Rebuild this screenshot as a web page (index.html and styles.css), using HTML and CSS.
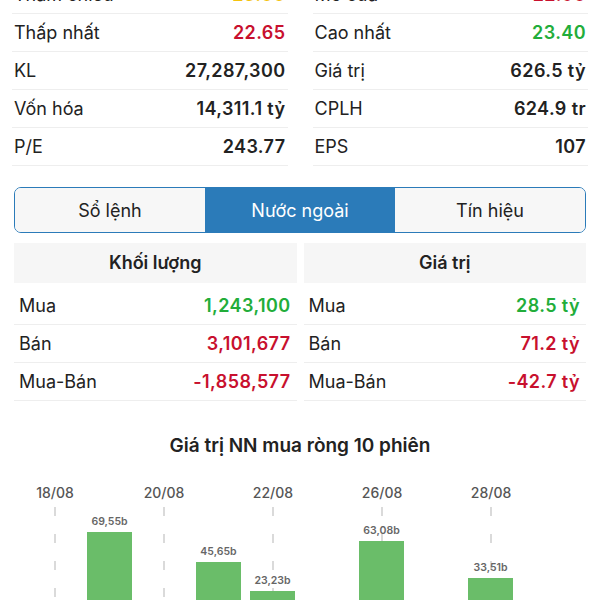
FILE: index.html
```html
<!DOCTYPE html>
<html lang="vi">
<head>
  <meta charset="UTF-8" />
  <meta name="viewport" content="width=device-width, initial-scale=1" />
  <title>Chi tiết cổ phiếu</title>
  <link rel="stylesheet" href="styles.css">
</head>
<body>
  <div class="page">
    <!-- thông tin giá -->
    <div class="stats">
      <div class="stat-col">
        <div class="row"><span>Tham chiếu</span><b class="ref">23.00</b></div>
        <div class="row"><span>Thấp nhất</span><b class="down">22.65</b></div>
        <div class="row"><span>KL</span><b>27,287,300</b></div>
        <div class="row"><span>Vốn hóa</span><b>14,311.1 tỷ</b></div>
        <div class="row"><span>P/E</span><b>243.77</b></div>
      </div>
      <div class="stat-col">
        <div class="row"><span>Mở cửa</span><b class="down">22.90</b></div>
        <div class="row"><span>Cao nhất</span><b class="up">23.40</b></div>
        <div class="row"><span>Giá trị</span><b>626.5 tỷ</b></div>
        <div class="row"><span>CPLH</span><b>624.9 tr</b></div>
        <div class="row"><span>EPS</span><b>107</b></div>
      </div>
    </div>

    <div class="tabs">
      <button class="tab">Sổ lệnh</button>
      <button class="tab active">Nước ngoài</button>
      <button class="tab">Tín hiệu</button>
    </div>

    <div class="foreign">
      <div class="table">
        <div class="table-head">Khối lượng</div>
        <div class="row"><span>Mua</span><b class="up">1,243,100</b></div>
        <div class="row"><span>Bán</span><b class="down">3,101,677</b></div>
        <div class="row"><span>Mua-Bán</span><b class="down">-1,858,577</b></div>
      </div>
      <div class="table">
        <div class="table-head">Giá trị</div>
        <div class="row"><span>Mua</span><b class="up">28.5 tỷ</b></div>
        <div class="row"><span>Bán</span><b class="down">71.2 tỷ</b></div>
        <div class="row"><span>Mua-Bán</span><b class="down">-42.7 tỷ</b></div>
      </div>
    </div>
  </div>

  <div class="chart">
    <h3 class="chart-title">Giá trị NN mua ròng 10 phiên</h3>
    <svg class="chart-svg" viewBox="0 0 600 150" width="600" height="150">
      <g class="dates">
        <text x="55" y="29">18/08</text>
        <text x="164" y="29">20/08</text>
        <text x="273" y="29">22/08</text>
        <text x="382" y="29">26/08</text>
        <text x="491" y="29">28/08</text>
      </g>
      <g class="grid">
        <line x1="55" y1="38" x2="55" y2="150" />
        <line x1="164" y1="38" x2="164" y2="150" />
        <line x1="273" y1="38" x2="273" y2="150" />
        <line x1="382" y1="38" x2="382" y2="150" />
        <line x1="491" y1="38" x2="491" y2="150" />
      </g>
      <g class="bars">
        <rect x="87" y="63" width="45" height="90" />
        <rect x="196" y="93" width="45" height="60" />
        <rect x="250" y="122" width="45" height="30" />
        <rect x="359" y="72" width="45" height="80" />
        <rect x="468" y="109" width="45" height="45" />
      </g>
      <g class="bar-labels">
        <text x="109.5" y="56">69,55b</text>
        <text x="218.5" y="86">45,65b</text>
        <text x="272.5" y="115">23,23b</text>
        <text x="381.5" y="65">63,08b</text>
        <text x="490.5" y="102">33,51b</text>
      </g>
    </svg>
  </div>
</body>
</html>
```

FILE: styles.css
```css
body {
  font-family: Inter, 'Noto Sans', sans-serif;
  margin: 0;
  background: #fff;
  color: #222;
  overflow: hidden;
}
.page {
  padding: 0 14px;
}
.stats {
  display: grid;
  grid-template-columns: 1fr 1fr;
  column-gap: 25px;
  margin: -24px -2px 0;
}
.row {
  display: flex;
  justify-content: space-between;
  align-items: center;
  height: 38px;
  border-bottom: 1px solid #eeeeee;
  font-size: 18px;
  box-sizing: border-box;
}
.row span {
  padding-left: 2px;
}
.row b {
  font-weight: 600;
  letter-spacing: 0.4px;
}
.stats .row b {
  padding-right: 2px;
}
.up { color: #22ad3a; }
.down { color: #c8102e; }
.ref { color: #f4c20d; }

.tabs {
  display: grid;
  grid-template-columns: repeat(3, 1fr);
  margin-top: 21px;
  height: 46px;
  border: 1.5px solid #2b7bb9;
  border-radius: 7px;
  overflow: hidden;
  box-sizing: border-box;
}
.tab {
  font-family: inherit;
  font-size: 18px;
  color: #222;
  background: #f7f7f7;
  border: none;
  padding: 0;
}
.tab.active {
  background: #2b7bb9;
  color: #fff;
}

.foreign {
  display: grid;
  grid-template-columns: 1fr 1fr;
  column-gap: 7px;
  margin-top: 10px;
}
.table-head {
  height: 40px;
  line-height: 40px;
  background: #f6f6f6;
  text-align: center;
  font-size: 18px;
  font-weight: 600;
  margin-bottom: 4px;
}
.table .row {
  padding: 0 6px 0 3px;
}

.chart-title {
  margin: 33px 0 0;
  text-align: center;
  font-size: 19px;
  font-weight: 600;
  line-height: 24px;
}
.chart-svg {
  display: block;
  margin-top: 11px;
}
.dates text {
  font-size: 14px;
  font-weight: 500;
  fill: #555;
  text-anchor: middle;
}
.grid line {
  stroke: #b5b5b5;
  stroke-width: 1;
  stroke-dasharray: 9 18;
}
.bars rect {
  fill: #6abd69;
}
.bar-labels text {
  font-size: 10.5px;
  font-weight: 600;
  fill: #666;
  text-anchor: middle;
}
```
